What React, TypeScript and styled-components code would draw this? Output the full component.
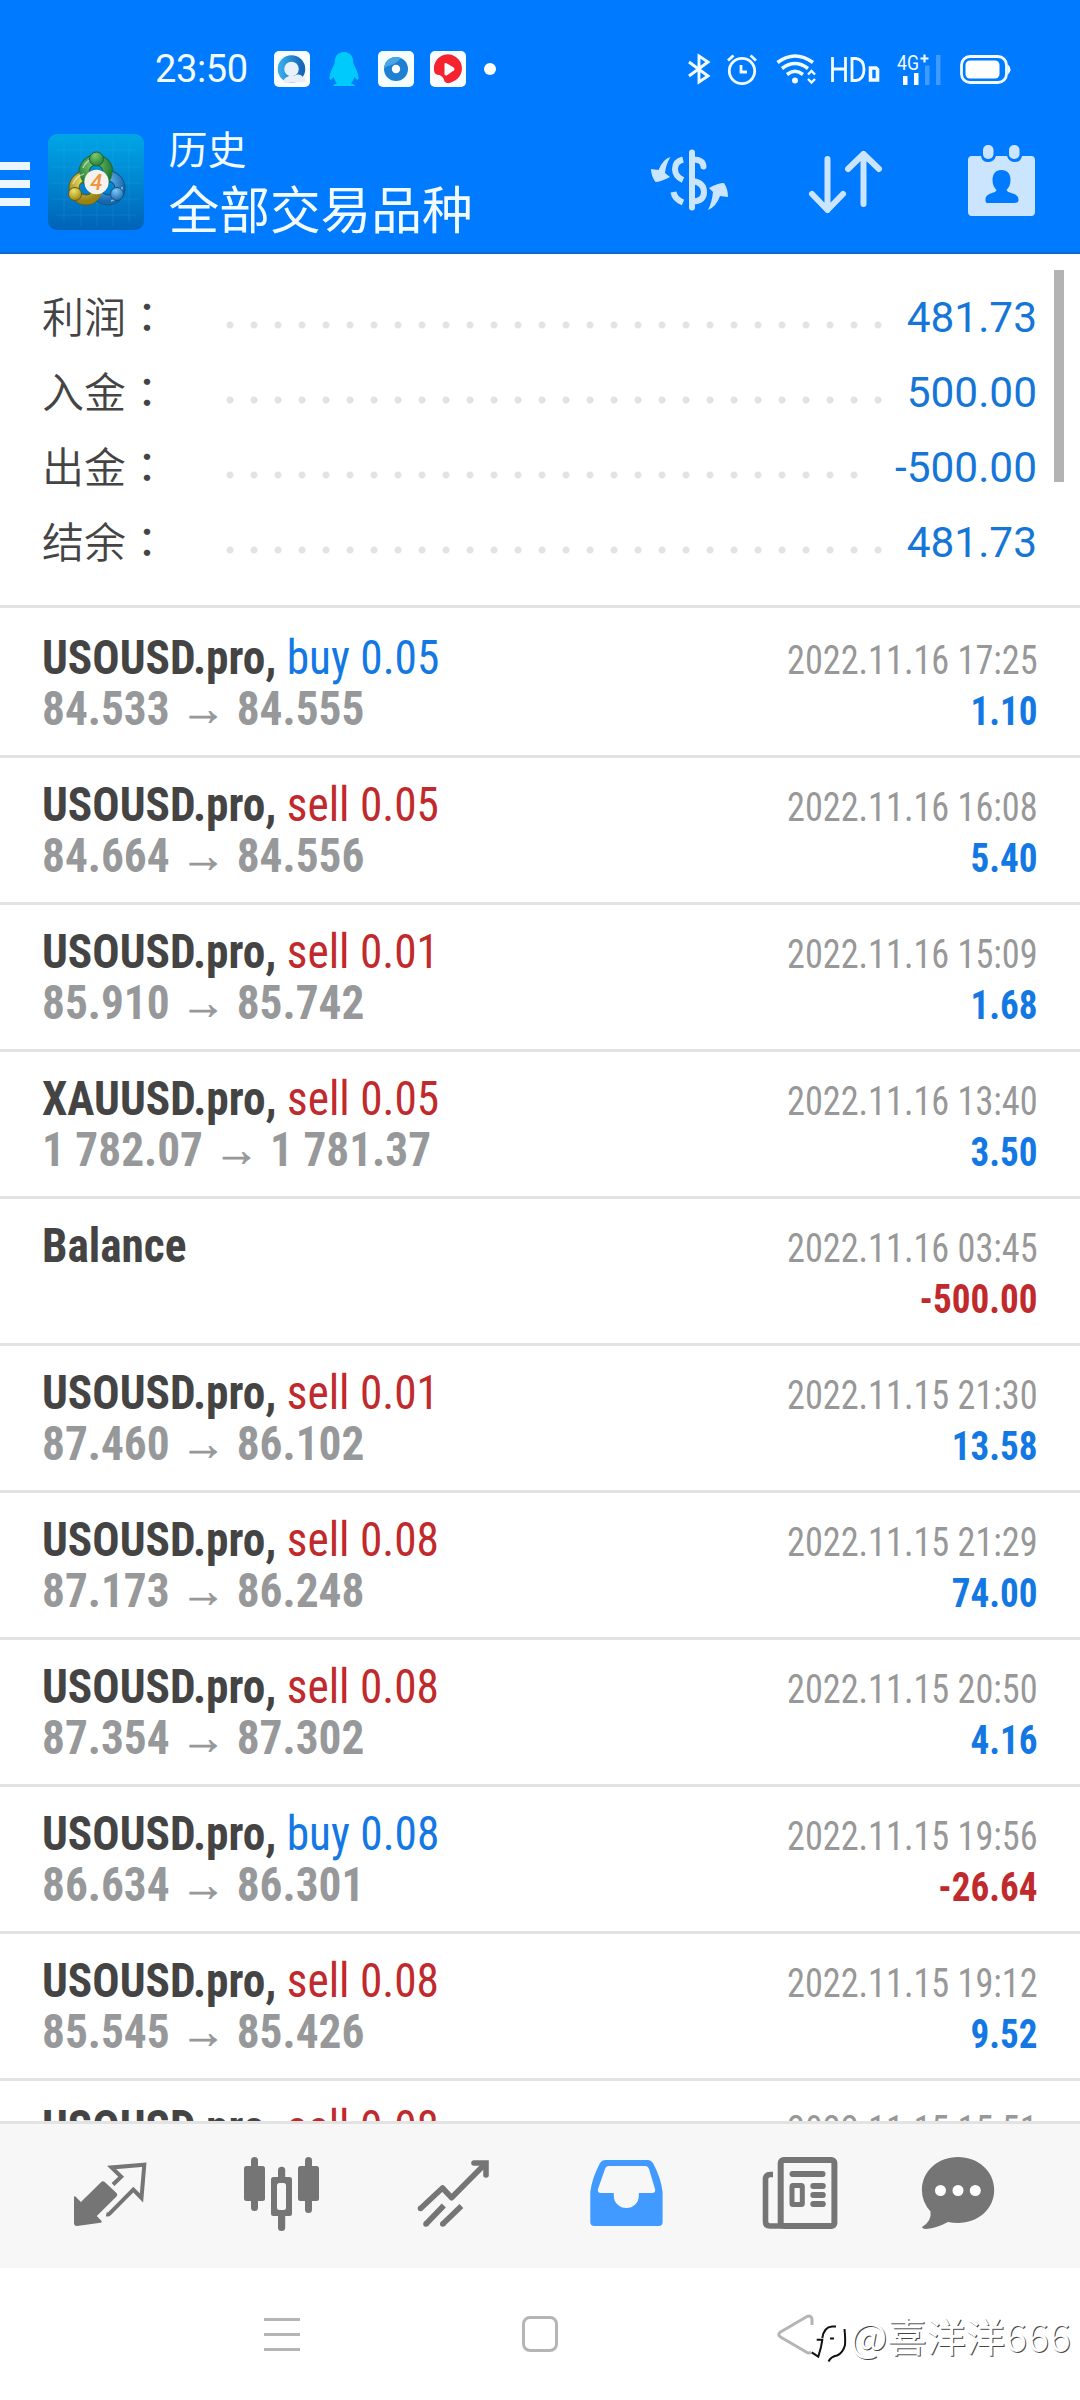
import React from 'react';
import styled, { createGlobalStyle } from 'styled-components';

const latin = `"Roboto Condensed", Roboto, "Noto Sans CJK SC", sans-serif`;
const cjk = `"Noto Sans CJK SC", sans-serif`;

const GlobalStyle = createGlobalStyle`
  *, *::before, *::after { box-sizing: border-box; }
  body { margin: 0; background: #fff; }
`;

const Screen = styled.div`
  width: 1080px;
  height: 2400px;
  display: flex;
  flex-direction: column;
  background: #fff;
  overflow: hidden;
  font-family: ${latin};
`;

/* ---------- header ---------- */

const Header = styled.header`
  flex: none;
  height: 254px;
  background: #007aff;
  border-bottom: 2px solid #0b6bcb;
  color: #f2fbff;
`;

const StatusBar = styled.div`
  height: 122px;
  padding: 16px 69px 0 155px;
  display: flex;
  align-items: center;
  justify-content: space-between;
`;

const StatusGroup = styled.div`
  display: flex;
  align-items: center;
`;

const Clock = styled.span`
  width: 119px;
  font: 400 38px/44px Roboto, sans-serif;
  letter-spacing: -0.4px;
`;

const Glyph = styled.svg<{ $gap?: number; $top?: number }>`
  display: block;
  flex: none;
  overflow: visible;
  margin-left: ${(p) => p.$gap ?? 0}px;
  margin-top: ${(p) => p.$top ?? 0}px;
`;

const Dot = styled.span`
  width: 12px;
  height: 12px;
  margin-left: 18px;
  border-radius: 50%;
  background: #fff;
`;

const TitleBar = styled.div`
  height: 130px;
  display: flex;
  align-items: flex-start;
`;

const MenuButton = styled.div`
  width: 30px;
  margin: 40px 18px 0 0;
  display: flex;
  flex-direction: column;
  gap: 10px;
`;

const MenuLine = styled.span`
  height: 8px;
  background: #ecf6ff;
`;

const Logo = styled.svg`
  display: block;
  margin-top: 12px;
`;

const Titles = styled.div`
  width: 507px;
  margin-top: -1px;
  padding-left: 24.500px;
  font-family: ${cjk};
  font-weight: 400;
`;

const Subtitle = styled.div`
  font-size: 39px;
  line-height: 52px;
`;

const Title = styled.div`
  font-size: 50.7px;
  line-height: 68px;
`;

/* ---------- summary ---------- */

const Content = styled.main`
  position: relative;
  flex: 1;
  min-height: 0;
  overflow: hidden;
`;

const ScrollThumb = styled.div`
  position: absolute;
  top: 16px;
  right: 16px;
  width: 10px;
  height: 212px;
  background: #b3b3b3;
`;

const Summary = styled.section`
  height: 354px;
  padding: 24px 43px 0 42px;
  border-bottom: 3px solid #e3e3e3;
`;

const SummaryRow = styled.div`
  display: flex;
  height: 75px;
  line-height: 75px;
`;

const Label = styled.span`
  width: 176px;
  margin-top: -1px;
  font-family: ${cjk};
  font-size: 42px;
  font-weight: 350;
  color: #444;
`;

const Colon = styled.span`
  font-family: "Noto Sans CJK TC", sans-serif;
  font-weight: 400;
`;

const Leader = styled.span`
  flex: 1;
  height: 24px;
  margin: 35px 22px 0 0;
  background: radial-gradient(circle at 12px 12px, #e3e3e3 3px, transparent 4px) 0 0 / 24px 24px repeat-x;
`;

const Total = styled.span`
  padding-top: 2px;
  font-family: Roboto, sans-serif;
  font-size: 42.4px;
  color: #1676d8;
`;

/* ---------- deals ---------- */

const Deal = styled.article`
  height: 147px;
  padding: 21px 42px 0 42px;
  border-top: 3px solid #e3e3e3;
  display: flex;
  justify-content: space-between;
  white-space: nowrap;
  &:first-of-type { border-top-color: transparent; }
`;

const Left = styled.div`
  font-stretch: 75%;
  font-size: 48px;
  line-height: 51px;
  transform: scaleX(0.944);
  transform-origin: left;
`;

const Symbol = styled.div`
  color: #444;
  font-weight: 700;
`;

const Action = styled.span<{ $buy: boolean }>`
  font-weight: 400;
  color: ${(p) => (p.$buy ? '#1478e4' : '#c12a2c')};
`;

const Prices = styled.div`
  font-weight: 700;
  color: #97989a;
`;

const Arrow = styled.span`
  margin: 0 11.500px;
  font: 400 48px/0 "Liberation Sans", sans-serif;
  -webkit-text-stroke: 0.7px currentColor;
`;

const Right = styled.div`
  padding-top: 3px;
  font-stretch: 75%;
  font-size: 40px;
  line-height: 51px;
  text-align: right;
`;

const Time = styled.div`
  color: #989898;
  transform: scaleX(0.906);
  transform-origin: right;
`;

const Profit = styled.div<{ $loss: boolean }>`
  font-weight: 700;
  color: ${(p) => (p.$loss ? '#c12a2c' : '#1478e4')};
  transform: scaleX(0.928);
  transform-origin: right;
`;

/* ---------- bottom bars ---------- */

const Tabs = styled.nav`
  flex: none;
  height: 147px;
  padding: 30px 0 0 70px;
  border-top: 3px solid #e3e3e3;
  background: #f7f7f7;
  display: grid;
  grid-template-columns: 172px 172px 173px 173px 158px 1fr;
`;

const TabIcon = styled.svg<{ $active?: boolean }>`
  width: 80px;
  height: 80px;
  color: ${(p) => (p.$active ? '#409aff' : '#757575')};
`;

const SystemBar = styled.footer`
  flex: none;
  height: 132px;
  padding: 46px 0 0 264px;
  display: flex;
`;

const SysIcon = styled.svg<{ $gap?: number }>`
  display: block;
  flex: none;
  margin-left: ${(p) => p.$gap ?? 0}px;
  fill: none;
  stroke: #b5b5b5;
  stroke-width: 3;
`;

const Watermark = styled.div`
  margin: -4px 0 0 -5px;
  display: flex;
  align-items: center;
  height: 50px;
  font: 400 39.3px/50px "Noto Sans CJK SC", sans-serif;
  color: #fff;
  white-space: nowrap;
  text-shadow: 1px 1px 0 #444;
`;

const Handle = styled.span`
  margin-left: 4px;
`;

type DealData = { symbol: string; side?: 'buy' | 'sell'; lots?: string; from?: string; to?: string; time: string; profit: string };

const d = (symbol: string, side: 'buy' | 'sell', lots: string, from: string, to: string, time: string, profit: string): DealData => ({
  symbol, side, lots, from, to, time, profit,
});

const deals: DealData[] = [
  d('USOUSD.pro', 'buy', '0.05', '84.533', '84.555', '2022.11.16 17:25', '1.10'),
  d('USOUSD.pro', 'sell', '0.05', '84.664', '84.556', '2022.11.16 16:08', '5.40'),
  d('USOUSD.pro', 'sell', '0.01', '85.910', '85.742', '2022.11.16 15:09', '1.68'),
  d('XAUUSD.pro', 'sell', '0.05', '1 782.07', '1 781.37', '2022.11.16 13:40', '3.50'),
  { symbol: 'Balance', time: '2022.11.16 03:45', profit: '-500.00' },
  d('USOUSD.pro', 'sell', '0.01', '87.460', '86.102', '2022.11.15 21:30', '13.58'),
  d('USOUSD.pro', 'sell', '0.08', '87.173', '86.248', '2022.11.15 21:29', '74.00'),
  d('USOUSD.pro', 'sell', '0.08', '87.354', '87.302', '2022.11.15 20:50', '4.16'),
  d('USOUSD.pro', 'buy', '0.08', '86.634', '86.301', '2022.11.15 19:56', '-26.64'),
  d('USOUSD.pro', 'sell', '0.08', '85.545', '85.426', '2022.11.15 19:12', '9.52'),
  { symbol: 'USOUSD.pro', side: 'sell', lots: '0.08', time: '2022.11.15 15:51', profit: '' },
];

const totals = [
  ['利润', '481.73'],
  ['入金', '500.00'],
  ['出金', '-500.00'],
  ['结余', '481.73'],
];

const StatusIcons = () => (
  <StatusBar>
    <StatusGroup>
      <Clock>23:50</Clock>
      <Glyph width="36" height="36" viewBox="0 0 36 36">
        <defs>
          <linearGradient id="ring" x1="0" x2="1"><stop offset="0" stopColor="#35a9ea" /><stop offset="1" stopColor="#1467b8" /></linearGradient>
        </defs>
        <rect width="36" height="36" rx="5" fill="#f8fdff" />
        <circle cx="17.5" cy="18" r="10.5" fill="#e9f1fa" stroke="url(#ring)" strokeWidth="6.5" />
        <path d="M10 32a5 5 0 0 1 3-6 7 7 0 0 1 7-1 6 6 0 0 1 9 1q3 1 3 5z" fill="#e9eff8" />
      </Glyph>
      <Glyph $gap={19} width="30" height="36" viewBox="0 0 30 36">
        <path d="M15 1C8 1 5.500 6 5.500 13C3 18 .500 22 .500 27c0 3 2 2 4-1 1 3 2 5 3.500 6.500Q4 33.500 4 35h22q0-1.500-4-2.500C23.500 31 24.500 29 25.500 26c2 3 4 4 4 1 0-5-2.500-9-5-14C24.500 6 22 1 15 1z" fill="#00cafc" />
      </Glyph>
      <Glyph $gap={19} width="36" height="36" viewBox="0 0 36 36">
        <rect width="36" height="36" rx="5" fill="#f4feff" />
        <circle cx="18" cy="18" r="12" fill="#1d80d2" />
        <path d="M6 18a12 12 0 0 1 17-11q-5 6-10 7T6 18z" fill="#4aa5e6" />
        <circle cx="18" cy="18" r="4.200" fill="#fff" />
      </Glyph>
      <Glyph $gap={16} width="36" height="36" viewBox="0 0 36 36">
        <rect width="36" height="36" rx="5" fill="#f8fcff" />
        <path d="M4 19A14 14 0 1 1 24 30Q18 34 14.500 30.500Q14 26 9.500 24Q4 24 4 19z" fill="#f4232f" />
        <path d="M14.500 12.500v11q1 1.500 2.500.800l7-5q1-1.300 0-2.500l-7-4.300q-1.500-.800-2.500 0z" fill="#fff" />
      </Glyph>
      <Dot />
    </StatusGroup>
    <StatusGroup>
      <Glyph width="23" height="30" viewBox="0 0 23 30" fill="none" stroke="#f2fbff" strokeWidth="2.900">
        <path d="M1 8l19 14-9 6V2L20 8 1 22" />
      </Glyph>
      <Glyph $gap={16} width="30" height="31" viewBox="0 0 30 31" fill="none" stroke="#f2fbff" strokeWidth="2.800">
        <circle cx="15" cy="17" r="12.700" />
        <path d="M14 11v7h6M1 6.500L6.500 1.500M29 6.500L23.500 1.500" />
      </Glyph>
      <Glyph $gap={19} width="40" height="30" viewBox="0 0 40 30" fill="none" stroke="#f2fbff" strokeWidth="3.600">
        <path d="M1.500 8.500Q19 -4.500 37 8.500M6 14.500Q19 4.500 32 14.500M11 20.500Q19 14 27 20.500" />
        <circle cx="19" cy="26.500" r="3" fill="#f2fbff" stroke="none" />
        <path d="M32 20.500l3.500-3.500 3.500 3.500M32 25l3.500 3.500 3.500-3.500" strokeWidth="2.400" />
      </Glyph>
      <Glyph $gap={15} width="49" height="25" viewBox="0 0 49 25" fill="none" stroke="#f2fbff" strokeWidth="2.800">
        <path d="M1.500 0v25M14.500 0v25M1.500 12h13M21 1.500v22h4q8-1 8-11T25 1.500z" />
        <path d="M39.500 11h5.500l1.500 1.500V23h-7z" strokeWidth="3.600" />
      </Glyph>
      <Glyph $gap={17} width="45" height="31" viewBox="0 0 45 31">
        <text x="0" y="16" fontFamily="Roboto" fontSize="20.500" fill="#f2fbff" textLength="22" lengthAdjust="spacingAndGlyphs">4G</text>
        <path d="M23.500 4.500h8M27.500 .500v8" stroke="#f2fbff" strokeWidth="2.200" />
        <path d="M6 22h4.500v9H6zM17 19h4.500v12H17z" fill="#fff" />
        <path d="M28 11.500h4.500V31H28zM39 1h4.500v30H39z" fill="#3f9bff" />
      </Glyph>
      <Glyph $gap={18} width="51" height="29" viewBox="0 0 51 29">
        <rect x="1.500" y="1.500" width="45" height="26" rx="8.500" fill="none" stroke="#f2fbff" strokeWidth="2.800" />
        <rect x="5.500" y="5.500" width="34" height="18" rx="4.500" fill="#fff" />
        <path d="M48 9.500q5 5 0 10z" fill="#f2fbff" />
      </Glyph>
    </StatusGroup>
  </StatusBar>
);

const AppLogo = () => (
  <Logo width="96" height="96" viewBox="0 0 96 96">
    <defs>
      <linearGradient id="sky" x1="0" y1="0" x2="0" y2="1"><stop offset="0" stopColor="#00a6e6" /><stop offset=".5" stopColor="#0086d0" /><stop offset="1" stopColor="#0062b8" /></linearGradient>
      <radialGradient id="g" cx=".4" cy=".25" r=".8"><stop offset="0" stopColor="#7fca6d" /><stop offset="1" stopColor="#1d7a34" /></radialGradient>
      <radialGradient id="y" cx=".4" cy=".25" r=".8"><stop offset="0" stopColor="#efe36a" /><stop offset="1" stopColor="#998210" /></radialGradient>
      <radialGradient id="b" cx=".4" cy=".25" r=".8"><stop offset="0" stopColor="#7cc8f4" /><stop offset="1" stopColor="#1567ae" /></radialGradient>
    </defs>
    <rect width="96" height="96" rx="9" fill="url(#sky)" />
    <path d="M8 16h80M4 33h88M4 49h88M4 65h88M8 81h80M16 8v80M33 4v88M49 4v88M65 4v88M81 8v80" stroke="#5fc4f4" strokeOpacity=".12" fill="none" />
    <circle cx="48" cy="38" r="12" fill="none" stroke="#24603b" strokeWidth="11" />
    <circle cx="38" cy="54" r="12" fill="none" stroke="#5d5b20" strokeWidth="11" />
    <circle cx="60" cy="54" r="12" fill="none" stroke="#174f80" strokeWidth="11" />
    <circle cx="60" cy="54" r="12" fill="none" stroke="url(#b)" strokeWidth="9" />
    <circle cx="38" cy="54" r="12" fill="none" stroke="url(#y)" strokeWidth="9" />
    <circle cx="48" cy="38" r="12" fill="none" stroke="url(#g)" strokeWidth="9" />
    <path d="M25 50q3-8 11-10M35 34q3-8 12-10M63 67q11-3 11-14" stroke="#fff" strokeOpacity=".5" strokeWidth="1.600" fill="none" />
    <circle cx="48.500" cy="25" r="7" fill="url(#g)" stroke="#24603b" />
    <circle cx="27" cy="60" r="6.500" fill="url(#y)" stroke="#5d5b20" />
    <circle cx="69" cy="60" r="6.500" fill="url(#b)" stroke="#174f80" />
    <circle cx="48.500" cy="48" r="12.200" fill="#f4f2ee" />
    <text x="48.300" y="56" textAnchor="middle" fontFamily="Roboto" fontSize="22" fontStyle="italic" fontWeight="500" fill="#f0963c">4</text>
  </Logo>
);

const ToolIcons = () => (
  <>
    <Glyph $gap={-1} $top={28} width="78" height="60" viewBox="0 0 78 60" fill="#cce5ff">
      <path d="M20.500 7Q13 9 8.500 20L1 19Q1 26 5.500 32q5 0 14.500-5l-5-4Q16 14 20.500 7zM58 60q8-3 12-14l8 1q0-8-4-14-6 0-15 5l4 4q-1 10-5 18z" />
      <path d="M33 9.500q-8 2-8 9.500t8 11M23.500 42q1 7 9.500 10.500" fill="none" stroke="#cce5ff" strokeWidth="6" />
      <path d="M42 2.500v55M43 9.500q10 0 10.500 7M43 31q11 2 11 11T43 51.500" fill="none" stroke="#cce5ff" strokeWidth="6" strokeLinecap="round" />
    </Glyph>
    <Glyph $gap={81} $top={28} width="74" height="64" viewBox="0 0 74 64" fill="none" stroke="#cce5ff" strokeWidth="6" strokeLinecap="round" strokeLinejoin="round">
      <path d="M18.500 9v51M3 44l15.500 16L34 44M54.500 54V4M39 19L54.500 4 70 19" />
    </Glyph>
    <Glyph $gap={84} $top={23} width="69" height="72" viewBox="0 0 69 72">
      <path fillRule="evenodd" fill="#cce5ff" d="M5 11h9q1 6 7 6t8-6h11q2 6 8 6t7-6h9q4 0 4 4v52q0 4-4 4H5q-4 0-4-4V15q0-4 4-4zM34.500 25c-6 0-9 4-9 10 0 5 2 8 4 10-1 4-11 2-11 10 0 3 1 3 3 3h26c3 0 4-1 4-3 0-8-11-6-12-10 2-2 4-5 4-10 0-6-3-10-9-10z" />
      <rect x="16" y="0" width="10.500" height="14" rx="5" fill="#cce5ff" />
      <rect x="42" y="0" width="10.500" height="14" rx="5" fill="#cce5ff" />
    </Glyph>
  </>
);

const TabIcons = () => (
  <Tabs>
    <TabIcon viewBox="0 0 80 80">
      <path d="M4 43.500q0-2 1.500-1l5.400 5.500L31 28.200q2-2 4 0L46.500 39q1.500 2 0 3.500L26.800 62l4.800 5q.500 1.500-1 1.700L7 72q-3 0-3-3z" fill="currentColor" />
      <path d="M43 30.500l8.200-7.800-9.600-9.200 32.700-2.700L71.500 44l-8.200-8.500-24 24.300q-1 1-3 .500" fill="none" stroke="currentColor" strokeWidth="4" />
    </TabIcon>
    <TabIcon viewBox="0 0 80 80" fill="currentColor">
      <rect x="2" y="12" width="21" height="35" rx="2.500" />
      <rect x="9" y="3" width="7" height="54" rx="3.500" />
      <rect x="29" y="23" width="21" height="39" rx="2.500" />
      <rect x="36" y="12.700" width="7.200" height="64.300" rx="3.500" />
      <rect x="35" y="29" width="9" height="27" rx="2.500" fill="#f7f7f7" />
      <rect x="56" y="12" width="21" height="35" rx="2.500" />
      <rect x="63" y="3" width="7" height="56" rx="3.500" />
    </TabIcon>
    <TabIcon viewBox="0 0 80 80" fill="none" stroke="currentColor" strokeWidth="5.600">
      <path d="M6.500 54.500L28.500 34l9 9.700L70 11" strokeLinejoin="round" />
      <path d="M60 9h12v12M6.500 54.500h.01M12 70h.01M28.800 70h.01" strokeLinecap="round" />
      <path d="M12 70l17.800-18.500M28.800 70L47.400 52" />
    </TabIcon>
    <TabIcon $active viewBox="0 0 80 80">
      <path fillRule="evenodd" fill="currentColor" d="M18 6h43q3 0 5 3 8 15 9.600 29v30q0 4-4 4H7.300q-4 0-4-4V38Q5 24 13 9q2-3 5-3zM22 12q-3 0-4 3l-7 20q-1 4 3 4h12.800v3a12.500 12 0 0 0 25 0v-3H65q4 0 3-4l-6-20q-1-3-4-3z" />
    </TabIcon>
    <TabIcon viewBox="0 0 80 80">
      <g fill="none" stroke="currentColor">
        <rect x="20.700" y="6" width="53.700" height="66" rx="3" strokeWidth="6" />
        <path d="M13 20.500h-3Q5.500 20.500 5.500 25v42.500q0 4.500 4.500 4.500h12" strokeWidth="5.600" />
        <rect x="32" y="31.500" width="10.300" height="19" rx="1" strokeWidth="5" />
        <path d="M32.500 20h30M53.300 32h9.500M53.300 41h9.500M53.300 50h9.500" strokeWidth="6" strokeLinecap="round" />
      </g>
    </TabIcon>
    <TabIcon viewBox="0 0 80 80">
      <path d="M40 3C60 3 76.200 17 76.200 36S60 69 40 69q-5 0-10-1-11 6-22 7-4-.500-4-2 10-6 8.500-15.500Q3.900 48 3.900 36C3.900 17 20 3 40 3z" fill="currentColor" />
      <circle cx="22.500" cy="36.500" r="5.500" fill="#fff" />
      <circle cx="40" cy="36.500" r="5.500" fill="#fff" />
      <circle cx="57.300" cy="36.500" r="5.500" fill="#fff" />
    </TabIcon>
  </Tabs>
);

export default function App() {
  return (
    <Screen>
      <GlobalStyle />
      <Header>
        <StatusIcons />
        <TitleBar>
          <MenuButton><MenuLine /><MenuLine /><MenuLine /></MenuButton>
          <AppLogo />
          <Titles>
            <Subtitle>历史</Subtitle>
            <Title>全部交易品种</Title>
          </Titles>
          <ToolIcons />
        </TitleBar>
      </Header>
      <Content>
        <Summary>
          {totals.map(([label, value]) => (
            <SummaryRow key={label}>
              <Label>{label}<Colon>：</Colon></Label>
              <Leader />
              <Total>{value}</Total>
            </SummaryRow>
          ))}
        </Summary>
        {deals.map((deal) => (
          <Deal key={deal.time}>
            <Left>
              <Symbol>
                {deal.symbol}
                {deal.side && <>, <Action $buy={deal.side === 'buy'}>{deal.side} {deal.lots}</Action></>}
              </Symbol>
              {deal.from && <Prices>{deal.from}<Arrow>→</Arrow>{deal.to}</Prices>}
            </Left>
            <Right>
              <Time>{deal.time}</Time>
              <Profit $loss={deal.profit.startsWith('-')}>{deal.profit}</Profit>
            </Right>
          </Deal>
        ))}
        <ScrollThumb />
      </Content>
      <TabIcons />
      <SystemBar>
        <SysIcon width="36" height="40" viewBox="0 0 36 40"><path d="M0 5.500h36M0 20.500h36M0 35.500h36" /></SysIcon>
        <SysIcon $gap={222} width="36" height="40" viewBox="0 0 36 40"><rect x="1.500" y="3.500" width="33" height="33" rx="6.500" /></SysIcon>
        <SysIcon $gap={219} width="38" height="44" viewBox="0 0 38 44"><path d="M35 11V5q-1-4-5-2.500L3.500 18q-3.500 2.500 0 5L30 38.500q2 1 4-.500" /></SysIcon>
        <Watermark>
          <Glyph $top={17} width="36" height="40" viewBox="0 0 36 40" fill="none" stroke="#111" strokeWidth="2">
            <path d="M1.700 28.300l6.600 4.400 2.700-9.700 1.300-7.300H6.700M12.300 14Q14 3 22 2.500h4M20 14.500h4M34.500 5q1 10 .5 16-2 8-8 10.500-6 1-8.500 6" />
          </Glyph>
          <Handle>@喜洋洋666</Handle>
        </Watermark>
      </SystemBar>
    </Screen>
  );
}
